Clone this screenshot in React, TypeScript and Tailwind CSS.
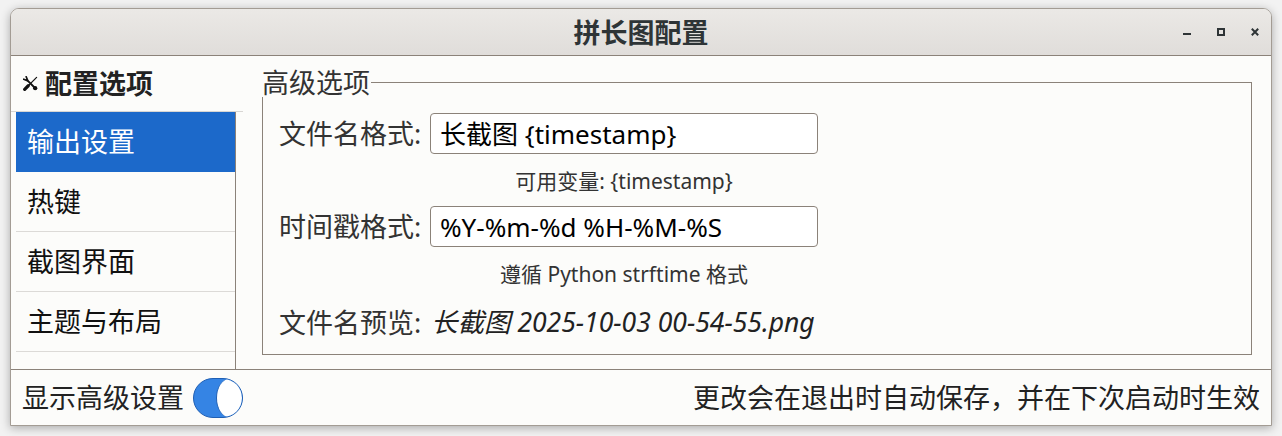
import React from "react";

const FONT = { fontFamily: '"Noto Sans", "Noto Sans CJK SC", sans-serif' };

const menuItems = ["输出设置", "热键", "截图界面", "主题与布局"];

const ToolsIcon: React.FC = () => (
  <svg width="15" height="15" viewBox="0 0 16 16" className="shrink-0">
    {/* screwdriver */}
    <path d="M5 11 L14.5 1.5" stroke="#111" strokeWidth="1.3" strokeLinecap="round" />
    <path d="M1.8 14.2 L5.6 10.4" stroke="#111" strokeWidth="3.4" strokeLinecap="round" />
    {/* wrench */}
    <path d="M5.5 5.5 L12.5 12.5" stroke="#111" strokeWidth="2" strokeLinecap="round" />
    <circle cx="13" cy="13" r="2.3" fill="#111" />
    <path d="M0.8 3.4 L5.2 5.2 L3.4 0.8" stroke="#111" strokeWidth="1.8" fill="none" strokeLinejoin="round" strokeLinecap="round" />
  </svg>
);

const WindowControls: React.FC = () => (
  <div className="flex items-center gap-[26px] pr-[12px]">
    <svg width="8" height="8" viewBox="0 0 8 8">
      <rect x="0" y="5" width="8" height="2" fill="#2e3436" />
    </svg>
    <svg width="8" height="8" viewBox="0 0 8 8">
      <rect x="1" y="1" width="6" height="6" fill="none" stroke="#2e3436" strokeWidth="2" />
    </svg>
    <svg width="8" height="8" viewBox="0 0 8 8">
      <path d="M0.8 0.8 L7.2 7.2 M7.2 0.8 L0.8 7.2" stroke="#2e3436" strokeWidth="2" />
    </svg>
  </div>
);

const Entry: React.FC<{ value: string }> = ({ value }) => (
  <div className="w-[388px] h-[41px] bg-white border border-[#8b8279] rounded-[4px] flex items-center pl-[9px] text-[26px] text-black leading-none">
    {value}
  </div>
);

const App: React.FC = () => {
  return (
    <div className="w-[1282px] h-[436px] bg-[#f2f2f2] pt-[8px] pl-[10px] overflow-hidden" style={FONT}>
      <div className="w-[1262px] h-[418px] flex flex-col bg-[#fcfcfa] border border-[#a39c94] rounded-t-[9px] shadow-[0_2px_10px_rgba(0,0,0,0.3)] overflow-hidden text-[#333]">
        {/* Title bar */}
        <div className="h-[47px] shrink-0 grid grid-cols-[1fr_auto_1fr] items-center bg-gradient-to-b from-[#ebe9e6] to-[#e0ddda] border-b border-[#8b8279]">
          <div />
          <div className="text-[27px] font-bold text-[#2e3436] leading-none">拼长图配置</div>
          <div className="flex justify-end">
            <WindowControls />
          </div>
        </div>

        {/* Body */}
        <div className="h-[313px] shrink-0 flex">
          {/* Sidebar */}
          <div className="w-[232px] shrink-0 flex flex-col">
            <div className="h-[56px] shrink-0 border-b border-[#d8d6d3] flex items-center pl-[12px] gap-[7px]">
              <ToolsIcon />
              <span className="text-[27px] font-bold text-[#222] leading-none">配置选项</span>
            </div>
            <div className="flex-1 pl-[5px]">
              <div className="w-[220px] h-full border-r border-[#8b8279]">
                {menuItems.map((item, i) => (
                  <div
                    key={item}
                    className={
                      i === 0
                        ? "h-[60px] flex items-center pl-[11px] text-[27px] leading-none bg-[#1c69ca] text-white border-b border-[#1c69ca]"
                        : "h-[60px] flex items-center pl-[11px] text-[27px] leading-none text-[#111] border-b border-[#dcdad7]"
                    }
                  >
                    {item}
                  </div>
                ))}
              </div>
            </div>
          </div>

          {/* Content */}
          <div className="flex-1 pl-[19px] pt-[26px]">
            <div className="relative w-[990px] h-[273px] border border-[#8b8279] pl-[16px] pt-[30px]">
              <span className="absolute left-[-1px] top-[-14px] bg-[#fcfcfa] pr-[1px] text-[27px] leading-[28px] text-[#333]">
                高级选项
              </span>

              <div className="flex h-[41px] items-center">
                <div className="w-[151px] text-[27px] leading-none">文件名格式:</div>
                <Entry value="长截图 {timestamp}" />
              </div>
              <div className="h-[52px] pt-[13px] pl-[151px]">
                <div className="w-[388px] text-center text-[21px] leading-[28px] text-[#333]">可用变量: {"{timestamp}"}</div>
              </div>

              <div className="flex h-[41px] items-center">
                <div className="w-[151px] text-[27px] leading-none">时间戳格式:</div>
                <Entry value="%Y-%m-%d %H-%M-%S" />
              </div>
              <div className="h-[52px] pt-[13px] pl-[151px]">
                <div className="w-[388px] text-center text-[21px] leading-[28px] text-[#333]">遵循 Python strftime 格式</div>
              </div>

              <div className="flex h-[46px] items-center">
                <div className="w-[152px] text-[27px] leading-none">文件名预览:</div>
                <div className="text-[26.5px] leading-none italic text-[#222]">长截图 2025-10-03 00-54-55.png</div>
              </div>
            </div>
          </div>
        </div>

        {/* Footer */}
        <div className="h-[56px] shrink-0 border-t border-[#8b8279] flex items-center justify-between pl-[11px] pr-[11px]">
          <div className="flex items-center gap-[9px]">
            <span className="text-[27px] leading-none text-[#222]">显示高级设置</span>
            <div className="w-[50px] h-[40px] rounded-full bg-[#3584e4] border border-[#1f5fb4] flex justify-end overflow-hidden">
              <div className="w-[26px] h-full rounded-[50%] bg-white border-l border-[#1f5fb4]" />
            </div>
          </div>
          <span className="text-[27px] leading-none text-[#222]">更改会在退出时自动保存，并在下次启动时生效</span>
        </div>
      </div>
    </div>
  );
};

export default App;
